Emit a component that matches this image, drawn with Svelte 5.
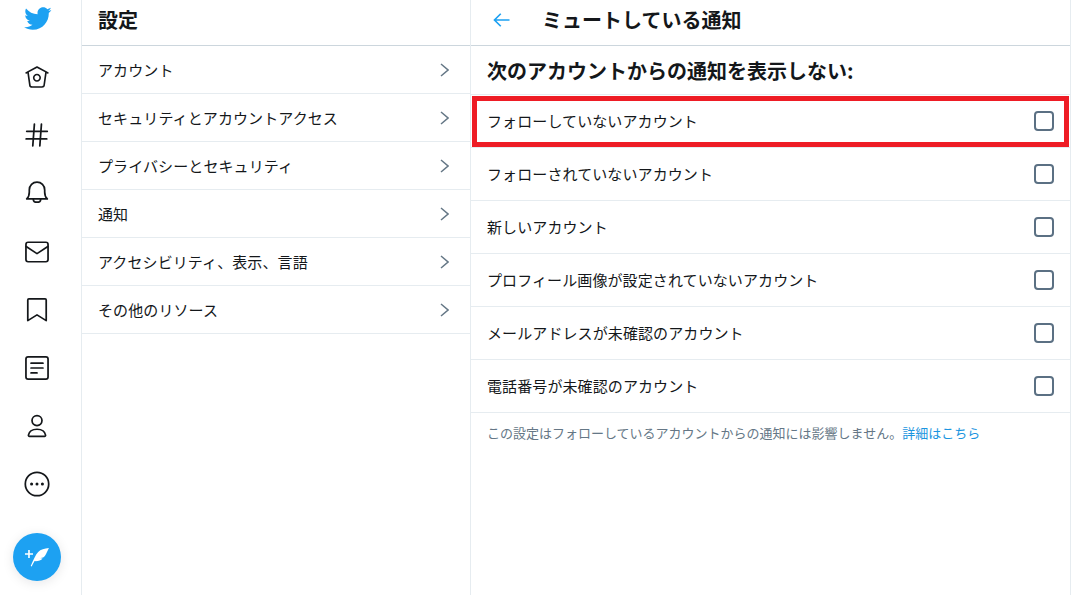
<script lang="ts">
  const nav_icons = ['home', 'hash', 'bell', 'mail', 'bookmark', 'list', 'person', 'more']

  const settings = [
    'アカウント',
    'セキュリティとアカウントアクセス',
    'プライバシーとセキュリティ',
    '通知',
    'アクセシビリティ、表示、言語',
    'その他のリソース',
  ]

  const filters = [
    'フォローしていないアカウント',
    'フォローされていないアカウント',
    '新しいアカウント',
    'プロフィール画像が設定されていないアカウント',
    'メールアドレスが未確認のアカウント',
    '電話番号が未確認のアカウント',
  ]
</script>

{#snippet icon(name: string)}
  <svg class="nav_icon" viewBox="0 0 24 24" aria-hidden="true">
    {#if name === 'home'}
      <path class="fill" d="M22.46 7.57L12.357 2.115c-.223-.12-.49-.12-.713 0L1.543 7.57c-.364.197-.5.652-.303 1.017.135.25.394.393.66.393.12 0 .243-.03.356-.09l.815-.44L4.7 19.963c.214 1.215 1.308 2.062 2.658 2.062h9.282c1.352 0 2.445-.848 2.663-2.087l1.626-11.49.818.442c.364.193.82.06 1.017-.304.196-.363.06-.818-.304-1.016zm-4.638 12.133c-.107.606-.703.822-1.18.822H7.36c-.48 0-1.075-.216-1.178-.798L4.48 7.69 12 3.628l7.522 4.06-1.7 12.015z" />
      <path class="fill" d="M8.22 12.704c0 2.06 1.67 3.73 3.73 3.73s3.73-1.67 3.73-3.73-1.67-3.73-3.73-3.73-3.73 1.67-3.73 3.73zm5.96 0c0 1.23-1 2.23-2.23 2.23s-2.23-1-2.23-2.23 1-2.23 2.23-2.23 2.23 1 2.23 2.23z" />
    {:else if name === 'hash'}
      <path d="M2.5 8.600h19M2 15.600h19M9.600 2l-1.500 20M16.100 2l-1.500 20" />
    {:else if name === 'bell'}
      <path d="M2.500 17.500h19c-1.900-1.600-2.400-3.600-2.400-6.400V9.200C19.100 5 16 2 12 2S4.900 5 4.900 9.200v1.900c0 2.800-.5 4.800-2.400 6.400z" />
      <path d="M8.600 17.700c0 1.700 1.500 2.800 3.400 2.800s3.400-1.100 3.400-2.800" />
    {:else if name === 'mail'}
      <rect x="1.800" y="3" width="20.400" height="18" rx="2" />
      <path d="M2 7l10 6.500L22 7" />
    {:else if name === 'bookmark'}
      <path d="M4.500 1.800h15a1 1 0 0 1 1 1v19L12 16.500 3.500 21.800v-19a1 1 0 0 1 1-1z" />
    {:else if name === 'list'}
      <rect x="1.800" y="1.800" width="20.400" height="20.400" rx="2" />
      <path d="M6.500 7.500h11M6.500 12h11M6.500 16.500h5.500" />
    {:else if name === 'person'}
      <circle cx="12" cy="7" r="4.600" />
      <path d="M5 21.500c-.6 0-1-.4-.9-1 .6-3.600 3.600-5.500 7.900-5.500s7.300 1.900 7.900 5.500c.1.600-.3 1-.9 1z" />
    {:else}
      <circle cx="12" cy="12" r="10.800" />
      <circle class="fill" cx="7" cy="12" r="1.400" />
      <circle class="fill" cx="12" cy="12" r="1.400" />
      <circle class="fill" cx="17" cy="12" r="1.400" />
    {/if}
  </svg>
{/snippet}

<div class="page">
  <nav class="sidebar">
    <div class="logo_slot">
      <svg class="logo" viewBox="0 0 24 24" aria-hidden="true">
        <path d="M23.643 4.937c-.835.37-1.732.62-2.675.76.962-.576 1.7-1.49 2.048-2.578-.9.534-1.897.922-2.958 1.13-.85-.904-2.06-1.47-3.4-1.47-2.572 0-4.658 2.086-4.658 4.66 0 .364.042.718.12 1.06-3.873-.195-7.304-2.05-9.602-4.868-.4.69-.63 1.49-.63 2.342 0 1.616.823 3.043 2.072 3.878-.764-.025-1.482-.234-2.11-.583v.06c0 2.257 1.605 4.14 3.737 4.568-.392.106-.803.162-1.227.162-.3 0-.593-.028-.877-.082.593 1.85 2.313 3.198 4.352 3.234-1.595 1.25-3.604 1.995-5.786 1.995-.376 0-.747-.022-1.112-.065 2.062 1.323 4.51 2.093 7.14 2.093 8.57 0 13.255-7.098 13.255-13.254 0-.2-.005-.402-.014-.602.91-.658 1.7-1.477 2.323-2.41z" />
      </svg>
    </div>
    {#each nav_icons as name}
      <div class="nav_item">{@render icon(name)}</div>
    {/each}
    <button class="compose" aria-label="ツイートする">
      <svg viewBox="0 0 24 24" aria-hidden="true">
        <path class="plus" d="M.9 9.200h7.400M4.600 5.500v7.400" />
        <path class="quill" d="M23 3.700c-4.200.4-7.600 1.300-9.900 3.600-2.600 2.600-4.500 7.700-6.900 13l.9.400c.9-1.800 1.800-3.500 2.700-4.900 3.300.2 5.800-.7 7.400-2.500-.9 0-1.800-.1-2.500-.4 2 .2 3.600-.4 4.700-2 1.200-1.900 2.200-4.400 3.600-7.200z" />
      </svg>
    </button>
  </nav>

  <section class="settings">
    <header class="col_header"><h1>設定</h1></header>
    {#each settings as title}
      <div class="settings_row">
        <span>{title}</span>
        <svg class="chevron" viewBox="0 0 9 14" aria-hidden="true"><path d="M1 1l7 6-7 6" /></svg>
      </div>
    {/each}
  </section>

  <section class="detail">
    <header class="col_header detail_header">
      <svg class="back" viewBox="0 0 24 24" aria-hidden="true"><path d="M21 12H3.500M10.500 4.500L3 12l7.500 7.500" /></svg>
      <h1>ミュートしている通知</h1>
    </header>
    <h2>次のアカウントからの通知を表示しない:</h2>
    <div class="filters">
      {#each filters as label, i}
        <div class="filter_row" class:marked={i === 0}>
          <span class="filter_label">{label}</span>
          <span class="checkbox"></span>
        </div>
      {/each}
    </div>
    <p class="note">この設定はフォローしているアカウントからの通知には影響しません。<span class="link">詳細はこちら</span></p>
  </section>
</div>

<style>
  :global(body) {
    background: #fff;
  }

  .page {
    display: flex;
    width: 1071px;
    height: 595px;
    overflow: hidden;
    font-family: 'Noto Sans CJK JP', 'Liberation Sans', sans-serif;
    color: #14171a;
  }

  .sidebar {
    display: flex;
    flex-direction: column;
    align-items: center;
    flex: none;
    width: 74px;
    padding-right: 7px;
    border-right: 1px solid #e6ecf0;
  }

  .logo_slot {
    display: flex;
    justify-content: center;
    align-items: center;
    flex: none;
    height: 37px;
    margin-bottom: 11px;
  }

  .logo {
    width: 29px;
    height: 29px;
    fill: #1da1f2;
  }

  .nav_item {
    display: flex;
    align-items: center;
    justify-content: center;
    flex: none;
    height: 58.2px;
  }

  .nav_icon {
    width: 26px;
    height: 26px;
    fill: none;
    stroke: #14171a;
    stroke-width: 1.6;
    stroke-linecap: round;
    stroke-linejoin: round;
  }

  .nav_icon .fill {
    fill: #14171a;
    stroke: none;
  }

  .compose {
    display: flex;
    align-items: center;
    justify-content: center;
    flex: none;
    width: 48px;
    height: 48px;
    margin-top: 19px;
    padding: 0;
    border: none;
    border-radius: 50%;
    background: #1da1f2;
    box-shadow: 0 2px 12px rgba(20, 23, 26, 0.1);
  }

  .compose svg {
    width: 26px;
    height: 26px;
  }

  .plus {
    fill: none;
    stroke: #fff;
    stroke-width: 1.5;
  }

  .quill {
    fill: #fff;
  }

  .settings {
    flex: none;
    width: 388px;
    border-right: 1px solid #e6ecf0;
  }

  .detail {
    flex: 1;
    border-right: 1px solid #e6ecf0;
  }

  .col_header {
    display: flex;
    align-items: center;
    box-sizing: border-box;
    height: 46px;
    padding-left: 16px;
    padding-bottom: 5px;
    border-bottom: 1px solid #ccd6dd;
  }

  h1 {
    margin: 0;
    font-size: 20px;
    font-weight: 700;
    line-height: 1;
  }

  .settings_row {
    display: flex;
    align-items: center;
    justify-content: space-between;
    height: 47px;
    padding: 0 21px 0 16px;
    border-bottom: 1px solid #e6ecf0;
    font-size: 15px;
    letter-spacing: 0.1px;
  }

  .chevron {
    width: 9px;
    height: 14px;
    fill: none;
    stroke: #657786;
    stroke-width: 1.5;
  }

  .detail_header {
    gap: 30px;
    padding-left: 21px;
  }

  .back {
    width: 20px;
    height: 20px;
    fill: none;
    stroke: #1da1f2;
    stroke-width: 2;
  }

  h2 {
    display: flex;
    align-items: center;
    height: 48px;
    margin: 0;
    padding-left: 16px;
    border-bottom: 1px solid #e6ecf0;
    font-size: 20px;
    font-weight: 700;
  }

  .filter_row {
    position: relative;
    display: flex;
    align-items: center;
    justify-content: space-between;
    height: 52px;
    padding: 0 16px;
    border-bottom: 1px solid #e6ecf0;
    font-size: 15px;
  }

  .filter_label {
    padding-bottom: 2px;
    letter-spacing: 0.1px;
  }

  /* the red box was drawn over the screenshot */
  .marked::after {
    content: '';
    position: absolute;
    left: 1px;
    right: 1px;
    top: 1px;
    height: 41px;
    border: 5px solid #ee1c25;
  }

  .checkbox {
    width: 20px;
    height: 20px;
    box-sizing: border-box;
    border: 2px solid #5b7083;
    border-radius: 4px;
  }

  .note {
    margin: 0;
    padding: 10px 16px;
    font-size: 13px;
    line-height: 19px;
    color: #657786;
  }

  .link {
    color: #1b95e0;
  }
</style>
